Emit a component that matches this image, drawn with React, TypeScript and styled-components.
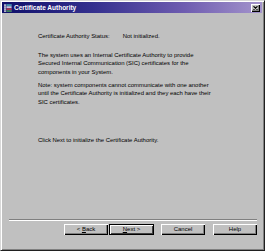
import React from "react";
import styled, { createGlobalStyle } from "styled-components";

const Global = createGlobalStyle`
  html, body { margin: 0; padding: 0; background: #c0c0c0; }
  * { box-sizing: border-box; }
`;

const Window = styled.div`
  width: 265px;
  height: 251px;
  background: #c0c0c0;
  border-top: 1px solid #d8d8d8;
  border-left: 1px solid #d8d8d8;
  border-right: 1px solid #202020;
  border-bottom: 1px solid #202020;
  box-shadow: inset 1px 1px 0 #ffffff, inset -1px -1px 0 #808080;
  padding: 1px 2px 2px 1px;
  display: flex;
  flex-direction: column;
  font-family: "Liberation Sans", Arial, sans-serif;
  color: #000;
`;

const TitleBar = styled.div`
  height: 11px;
  background: linear-gradient(to right, #10106a 0%, #34308e 35%, #6e5cb0 70%, #a494cc 100%);
  display: flex;
  align-items: center;
  padding: 0 2px 0 2px;
  gap: 2px;
`;

const TitleText = styled.span`
  flex: 1;
  color: #ffffff;
  font-weight: bold;
  font-size: 6.5px;
  line-height: 11px;
  white-space: nowrap;
`;

const CloseBox = styled.div`
  width: 9px;
  height: 8px;
  background: #c0c0c0;
  box-shadow: inset 1px 1px 0 #ffffff, inset -1px -1px 0 #000000, inset -2px -2px 0 #808080;
  display: flex;
  align-items: center;
  justify-content: center;
`;

const Body = styled.div`
  flex: 1;
  display: flex;
  flex-direction: column;
`;

const Content = styled.div`
  flex: 1;
  padding: 19px 12px 0 36px;
  font-size: 5.95px;
  line-height: 8.5px;
`;

const Para = styled.p<{ $mt: number }>`
  margin: ${(p) => p.$mt}px 0 0 0;
  white-space: nowrap;
`;

const Gap = styled.span`
  display: inline-block;
  width: 13px;
`;

const Footer = styled.div`
  padding: 0 5px 13px 7px;
  display: flex;
  flex-direction: column;
`;

const Separator = styled.div`
  height: 2px;
  border-top: 1px solid #808080;
  border-bottom: 1px solid #ffffff;
  margin-bottom: 3px;
`;

const ButtonRow = styled.div`
  display: flex;
  justify-content: flex-end;
  align-items: center;
`;

const Button = styled.div<{ $default?: boolean; $ml: number }>`
  width: ${(p) => (p.$default ? 45 : 44)}px;
  height: 11px;
  margin-left: ${(p) => p.$ml}px;
  background: #c0c0c0;
  font-size: 6px;
  line-height: 11px;
  text-align: center;
  border: ${(p) => (p.$default ? "1px solid #000" : "none")};
  box-shadow: ${(p) =>
    p.$default
      ? "inset 1px 1px 0 #ffffff, inset -1px -1px 0 #404040"
      : "inset 1px 1px 0 #ffffff, inset -1px -1px 0 #000000, inset -2px -2px 0 #808080"};
  display: flex;
  align-items: center;
  justify-content: center;
`;

const U = styled.span`
  text-decoration: underline;
`;

const AppIcon = () => (
  <svg width="8" height="8" viewBox="0 0 8 8">
    <rect x="0" y="0" width="8" height="8" fill="#3a3a8a" />
    <rect x="0" y="0.5" width="2" height="1.2" fill="#e0e0e0" />
    <rect x="2.5" y="0.5" width="5" height="1.2" fill="#40c0c0" />
    <rect x="0" y="2.5" width="2" height="1.2" fill="#e0e0e0" />
    <rect x="2.5" y="2.5" width="5" height="1.2" fill="#ffffff" />
    <rect x="0" y="4.5" width="2" height="1.2" fill="#e0e0e0" />
    <rect x="2.5" y="4.5" width="5" height="1.2" fill="#e03030" />
    <rect x="0" y="6.5" width="2" height="1.2" fill="#e0e0e0" />
    <rect x="2.5" y="6.5" width="5" height="1.2" fill="#40a040" />
  </svg>
);

const CloseX = () => (
  <svg width="5" height="4" viewBox="0 0 5 4">
    <path d="M0.5 0.3 L4.5 3.7 M4.5 0.3 L0.5 3.7" stroke="#000" strokeWidth="1.1" />
  </svg>
);

export default function App() {
  return (
    <>
      <Global />
      <Window>
        <TitleBar>
          <AppIcon />
          <TitleText>Certificate Authority</TitleText>
          <CloseBox>
            <CloseX />
          </CloseBox>
        </TitleBar>
        <Body>
          <Content>
            <Para $mt={0}>
              Certificate Authority Status:<Gap />Not initialized.
            </Para>
            <Para $mt={10}>
              The system uses an Internal Certificate Authority to provide
              <br />
              Secured Internal Communication (SIC) certificates for the
              <br />
              components in your System.
            </Para>
            <Para $mt={4.5}>
              Note: system components cannot communicate with one another
              <br />
              until the Certificate Authority is initialized and they each have their
              <br />
              SIC certificates.
            </Para>
            <Para $mt={30}>Click Next to initialize the Certificate Authority.</Para>
          </Content>
          <Footer>
            <Separator />
            <ButtonRow>
              <Button $ml={0}>
                &lt;&nbsp;<U>B</U>ack
              </Button>
              <Button $ml={1} $default>
                <U>N</U>ext&nbsp;&gt;
              </Button>
              <Button $ml={7}>Cancel</Button>
              <Button $ml={8}>Help</Button>
            </ButtonRow>
          </Footer>
        </Body>
      </Window>
    </>
  );
}
